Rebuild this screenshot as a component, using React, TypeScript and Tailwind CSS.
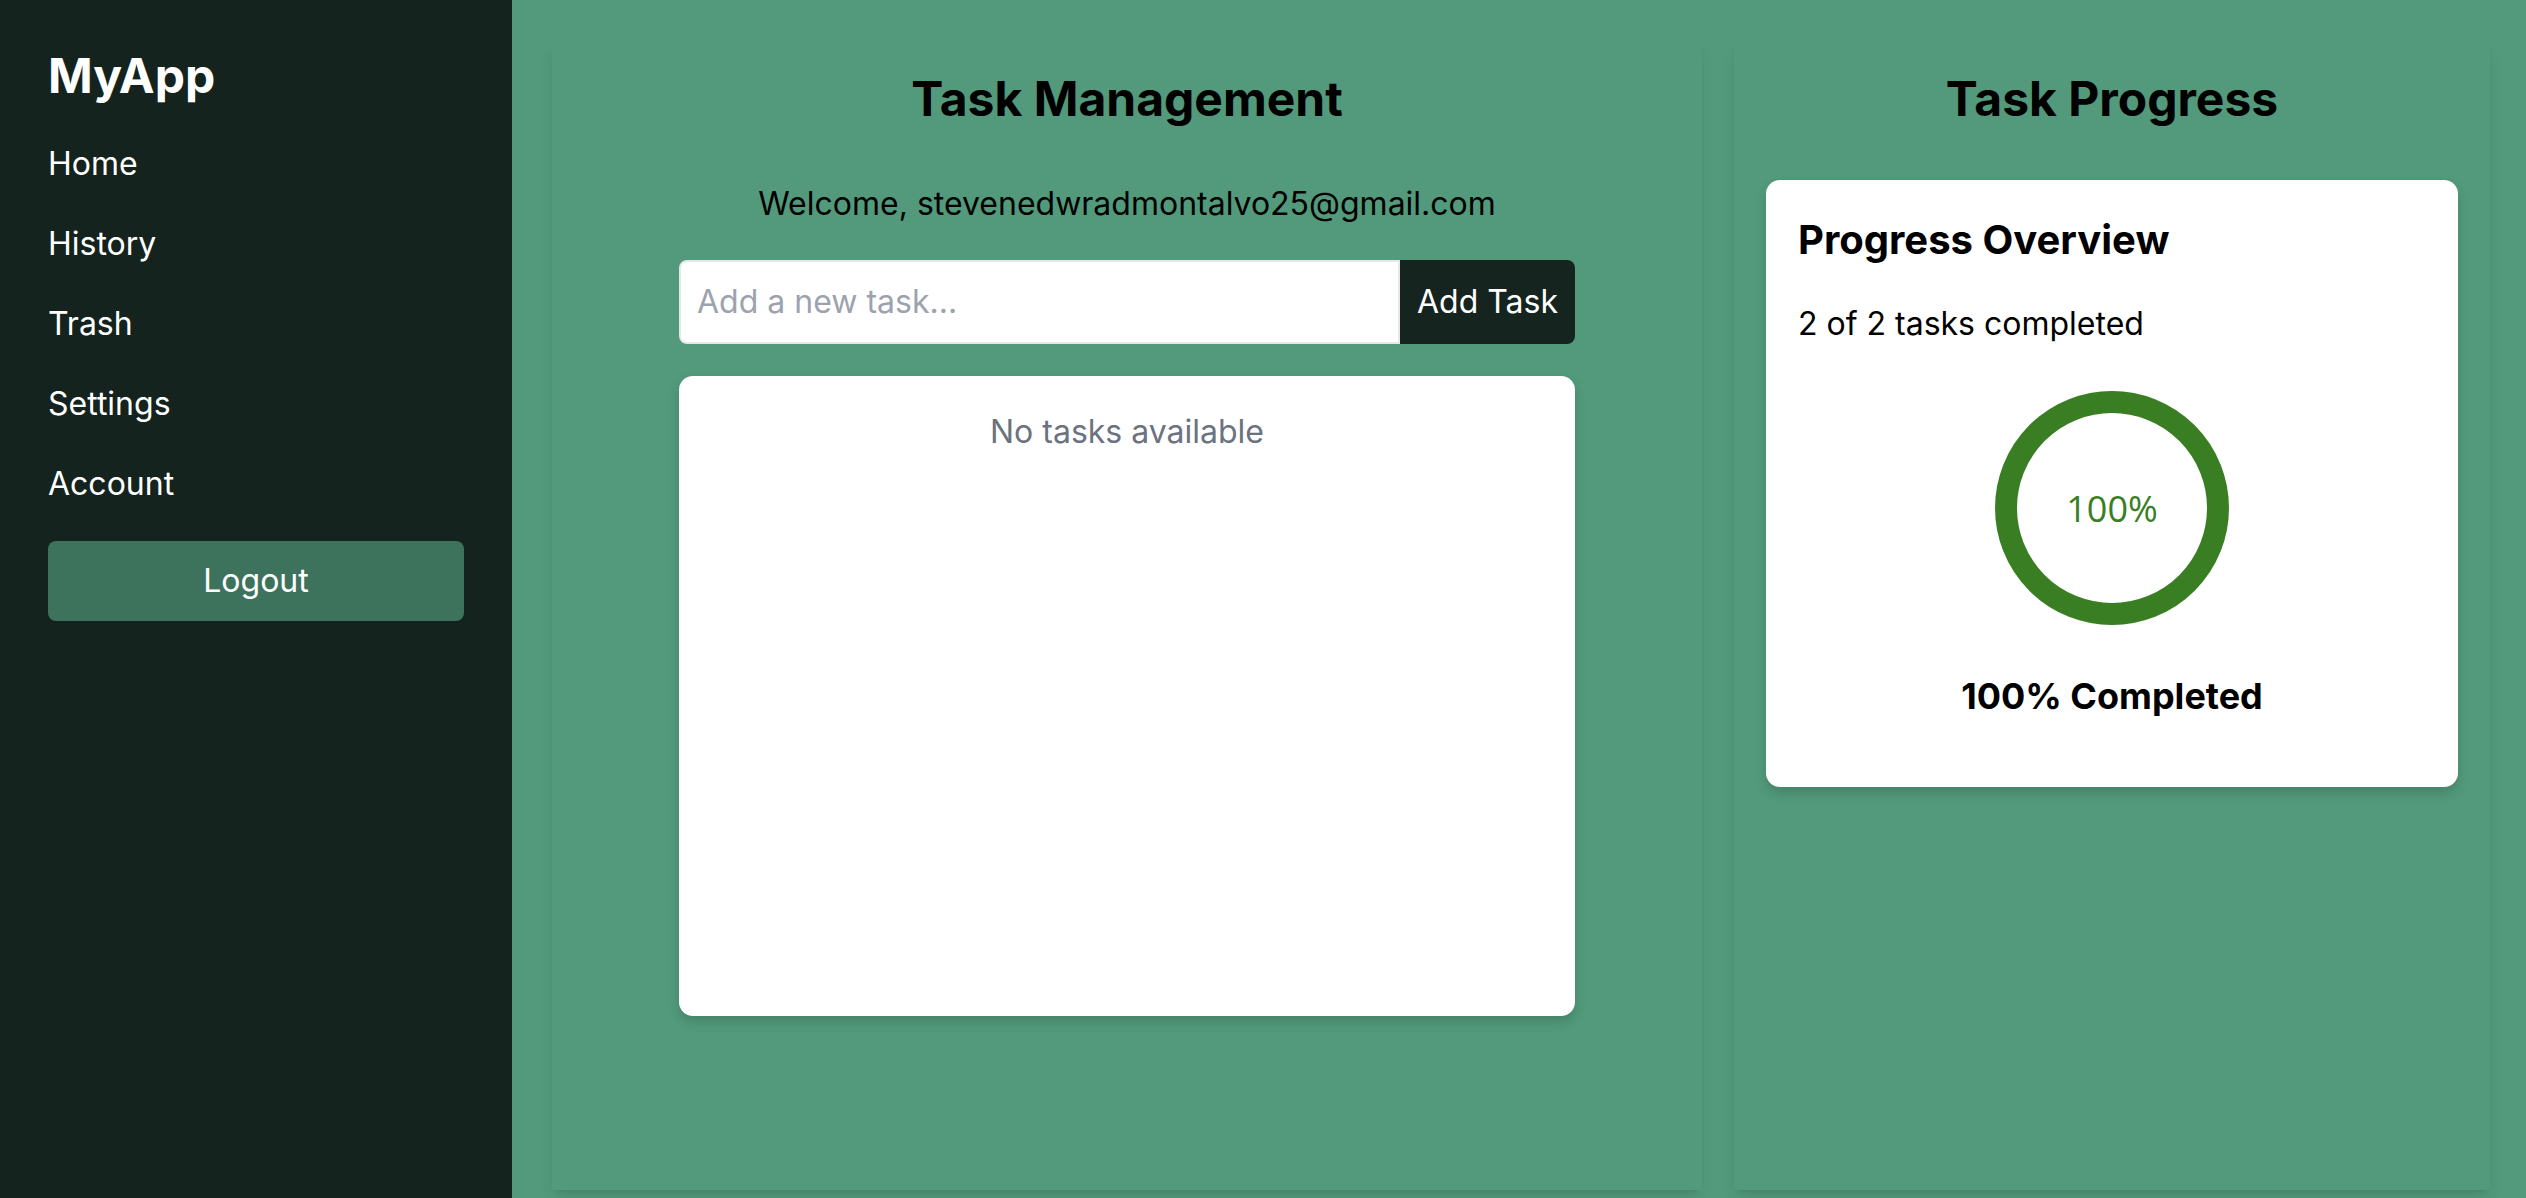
import { useState } from "react"

const navItems = ["Home", "History", "Trash", "Settings", "Account"]

function ProgressRing({ percent }: { percent: number }) {
  const size = 234
  const stroke = 22
  const r = (size - stroke) / 2
  const c = 2 * Math.PI * r
  return (
    <svg width={size} height={size} viewBox={`0 0 ${size} ${size}`}>
      <circle cx={size / 2} cy={size / 2} r={r} fill="none" stroke="#ffffff" strokeWidth={stroke} />
      <circle
        cx={size / 2}
        cy={size / 2}
        r={r}
        fill="none"
        stroke="#3a7e23"
        strokeWidth={stroke}
        strokeDasharray={c}
        strokeDashoffset={c - (c * percent) / 100}
        transform={`rotate(-90 ${size / 2} ${size / 2})`}
      />
      <text
        x="50%"
        y="50%"
        dominantBaseline="central"
        textAnchor="middle"
        fill="#3a7e23"
        fontSize="36"
        fontFamily="'Open Sans', sans-serif"
      >
        {percent}%
      </text>
    </svg>
  )
}

export default function App() {
  const [task, setTask] = useState("")

  return (
    <div className="flex h-[1198px] w-full overflow-hidden bg-[#529a7b] font-['Inter',sans-serif] text-black">
      {/* Sidebar */}
      <aside className="flex w-[512px] shrink-0 flex-col bg-[#14231d] px-[48px] pt-[44px] text-white">
        <h1 className="mb-[32px] text-[48px] font-bold leading-[64px]">MyApp</h1>
        <nav className="flex flex-col gap-[32px]">
          {navItems.map((item) => (
            <a key={item} href="#" className="text-[32px] leading-[48px]">
              {item}
            </a>
          ))}
        </nav>
        <button className="mt-[33px] w-full rounded-[8px] bg-[#3d735c] py-[16px] text-[32px] leading-[48px] text-white">
          Logout
        </button>
      </aside>

      {/* Main */}
      <main className="flex flex-1 gap-[32px] pl-[40px] pt-[40px]">
        <section className="flex h-[1150px] w-[1150px] shrink-0 flex-col items-center pt-[27px] shadow-[0_10px_15px_-3px_rgba(0,0,0,0.1),0_4px_6px_-4px_rgba(0,0,0,0.1)]">
          <h2 className="mb-[49px] text-[48px] font-bold leading-[64px]">Task Management</h2>
          <p className="mb-[32px] text-[32px] leading-[48px]">
            Welcome, stevenedwradmontalvo25@gmail.com
          </p>
          <div className="mb-[32px] flex w-[896px]">
            <input
              value={task}
              onChange={(e) => setTask(e.target.value)}
              placeholder="Add a new task..."
              className="min-w-0 flex-1 rounded-l-[8px] border-2 border-[#e5e7eb] bg-white px-[16px] py-[16px] text-[32px] leading-[48px] outline-none placeholder:text-[#9ca3af]"
            />
            <button className="rounded-r-[8px] bg-[#15241e] px-[17px] text-[32px] leading-[48px] text-white">
              Add Task
            </button>
          </div>
          <div className="h-[640px] w-[896px] rounded-[14px] bg-white p-[32px] text-center shadow-[0_6px_12px_rgba(0,0,0,0.15)]">
            <p className="text-[32px] leading-[48px] text-[#6b7280]">No tasks available</p>
          </div>
        </section>

        <section className="flex h-[1150px] w-[756px] shrink-0 flex-col px-[32px] pt-[27px] shadow-[0_10px_15px_-3px_rgba(0,0,0,0.1),0_4px_6px_-4px_rgba(0,0,0,0.1)]">
          <h2 className="mb-[49px] text-center text-[48px] font-bold leading-[64px]">Task Progress</h2>
          <div className="flex flex-col rounded-[14px] bg-white px-[32px] pb-[63px] pt-[32px] shadow-[0_6px_12px_rgba(0,0,0,0.15)]">
            <h3 className="mb-[32px] text-[40px] font-bold leading-[56px]">Progress Overview</h3>
            <p className="text-[32px] leading-[48px]">2 of 2 tasks completed</p>
            <div className="my-[43px] flex justify-center">
              <ProgressRing percent={100} />
            </div>
            <p className="text-center text-[36px] font-bold leading-[56px]">100% Completed</p>
          </div>
        </section>
      </main>
    </div>
  )
}
